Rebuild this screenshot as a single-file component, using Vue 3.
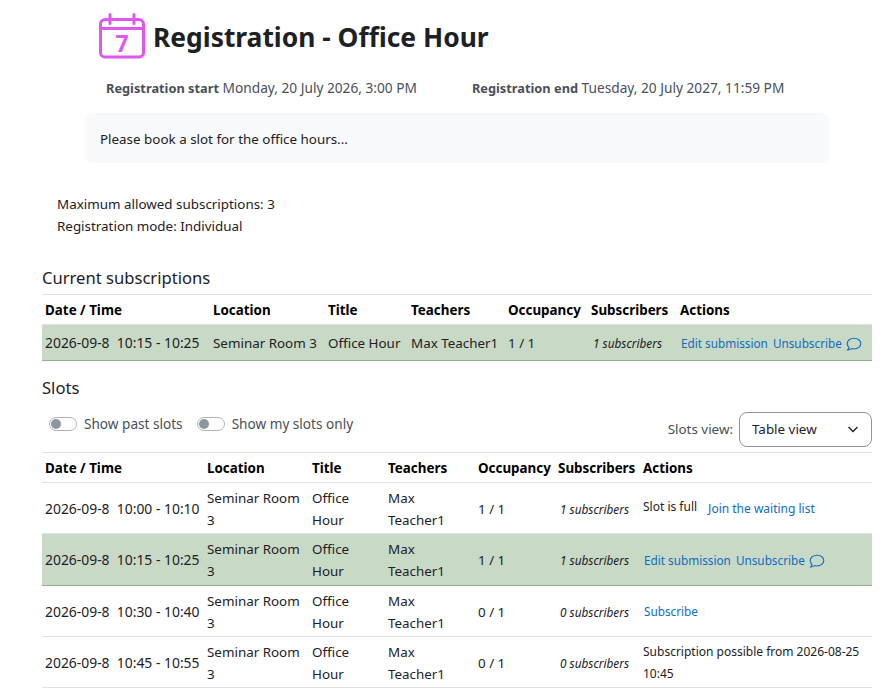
<script setup>
const currentRows = [
  { date: '2026-09-8  10:15 - 10:25', location: 'Seminar Room 3', title: 'Office Hour', teacher: 'Max Teacher1', occupancy: '1 / 1', subscribers: '1 subscribers', mine: true }
]

const slotRows = [
  { date: '2026-09-8  10:00 - 10:10', location: 'Seminar Room 3', title: 'Office Hour', teacher: 'Max Teacher1', occupancy: '1 / 1', subscribers: '1 subscribers', full: true },
  { date: '2026-09-8  10:15 - 10:25', location: 'Seminar Room 3', title: 'Office Hour', teacher: 'Max Teacher1', occupancy: '1 / 1', subscribers: '1 subscribers', mine: true },
  { date: '2026-09-8  10:30 - 10:40', location: 'Seminar Room 3', title: 'Office Hour', teacher: 'Max Teacher1', occupancy: '0 / 1', subscribers: '0 subscribers', open: true },
  { date: '2026-09-8  10:45 - 10:55', location: 'Seminar Room 3', title: 'Office Hour', teacher: 'Max Teacher1', occupancy: '0 / 1', subscribers: '0 subscribers', later: 'Subscription possible from 2026-08-25 10:45' }
]

const headers = ['Date / Time', 'Location', 'Title', 'Teachers', 'Occupancy', 'Subscribers', 'Actions']
const currentCols = [168, 115, 83, 97, 83, 89, 195]
const slotCols = [162, 105, 76, 90, 80, 85, 232]
</script>

<template>
  <div class="page">
    <div class="head">
      <div class="cal">
        <svg viewBox="0 0 46 46" fill="none" stroke="#e056f0" stroke-width="3">
          <rect x="1.500" y="6.500" width="43" height="37.500" rx="4.500" />
          <path d="M1.500 15.500H44.500" />
          <path d="M11 1.500V10.500M35 1.500V10.500" stroke-linecap="round" />
        </svg>
        <span class="cal-day">7</span>
      </div>
      <h1>Registration - Office Hour</h1>
    </div>

    <div class="dates">
      <span><b>Registration start</b> Monday, 20 July 2026, 3:00 PM</span>
      <span><b>Registration end</b> Tuesday, 20 July 2027, 11:59 PM</span>
    </div>

    <div class="intro">Please book a slot for the office hours...</div>

    <div class="limits">
      <div>Maximum allowed subscriptions: 3</div>
      <div>Registration mode: Individual</div>
    </div>

    <h2>Current subscriptions</h2>
    <table class="current">
      <colgroup>
        <col v-for="w in currentCols" :key="w" :style="{ width: w + 'px' }" />
      </colgroup>
      <thead>
        <tr><th v-for="h in headers" :key="h">{{ h }}</th></tr>
      </thead>
      <tbody>
        <tr v-for="row in currentRows" :key="row.date" class="mine">
          <td class="when">{{ row.date }}</td>
          <td>{{ row.location }}</td>
          <td>{{ row.title }}</td>
          <td>{{ row.teacher }}</td>
          <td>{{ row.occupancy }}</td>
          <td class="subs">{{ row.subscribers }}</td>
          <td class="small">
            <a class="own">Edit submission</a><a class="own gap">Unsubscribe</a>
            <svg class="bubble" viewBox="0 0 16 16" fill="none" stroke="#0f6cbf" stroke-width="1.1">
              <path d="M8 2.2c3.8 0 6.8 2.4 6.8 5.4S11.800 13 8 13c-.9 0-1.700-.1-2.500-.4-1 .8-2.300 1.300-3.800 1.300.7-.7 1.200-1.500 1.300-2.500C1.900 10.400 1.200 9.100 1.200 7.600 1.200 4.600 4.200 2.200 8 2.200z" />
            </svg>
          </td>
        </tr>
      </tbody>
    </table>

    <h2 class="slots-title">Slots</h2>
    <div class="filters">
      <label class="toggle"><span class="track"><span class="knob"></span></span>Show past slots</label>
      <label class="toggle"><span class="track"><span class="knob"></span></span>Show my slots only</label>
      <div class="view">
        <span>Slots view:</span>
        <div class="select">
          Table view
          <svg viewBox="0 0 12 12" fill="none" stroke="#1d2125" stroke-width="1.4">
            <path d="M1.500 4l4.500 4.500L10.500 4" />
          </svg>
        </div>
      </div>
    </div>

    <table class="slots">
      <colgroup>
        <col v-for="w in slotCols" :key="w" :style="{ width: w + 'px' }" />
      </colgroup>
      <thead>
        <tr><th v-for="h in headers" :key="h">{{ h }}</th></tr>
      </thead>
      <tbody>
        <tr v-for="row in slotRows" :key="row.date" :class="{ mine: row.mine }">
          <td class="when">{{ row.date }}</td>
          <td>{{ row.location }}</td>
          <td>{{ row.title }}</td>
          <td>{{ row.teacher }}</td>
          <td>{{ row.occupancy }}</td>
          <td class="subs">{{ row.subscribers }}</td>
          <td class="small">
            <template v-if="row.full">
              <span class="note">Slot is full</span><a class="wait">Join the waiting list</a>
            </template>
            <template v-else-if="row.mine">
              <a class="own">Edit submission</a><a class="own gap">Unsubscribe</a>
              <svg class="bubble" viewBox="0 0 16 16" fill="none" stroke="#0f6cbf" stroke-width="1.1">
                <path d="M8 2.2c3.8 0 6.8 2.4 6.8 5.4S11.800 13 8 13c-.9 0-1.700-.1-2.500-.4-1 .8-2.300 1.300-3.800 1.300.7-.7 1.200-1.500 1.300-2.500C1.900 10.400 1.200 9.100 1.200 7.600 1.200 4.600 4.200 2.200 8 2.200z" />
              </svg>
            </template>
            <a v-else-if="row.open" class="own">Subscribe</a>
            <span v-else>{{ row.later }}</span>
          </td>
        </tr>
      </tbody>
    </table>
  </div>
</template>

<style>
html, body {
  margin: 0;
  background: #fff;
}
</style>

<style scoped>
.page {
  width: 872px;
  height: 695px;
  overflow: hidden;
  padding-left: 42px;
  box-sizing: border-box;
  font-family: "Noto Sans", "Open Sans", sans-serif;
  font-size: 13.4px;
  line-height: 22px;
  color: #1d2125;
}

.head {
  display: flex;
  align-items: center;
  gap: 8px;
  padding: 13px 0 0 57px;
  height: 46px;
}

.cal {
  position: relative;
  width: 46px;
  height: 46px;
  flex: none;
}

.cal svg {
  display: block;
  width: 46px;
  height: 46px;
}

.cal-day {
  position: absolute;
  left: 0;
  top: 17px;
  width: 46px;
  text-align: center;
  font-size: 23px;
  line-height: 26px;
  font-weight: 700;
  color: #e056f0;
}

h1 {
  margin: 2px 0 0;
  font-size: 26.4px;
  line-height: 40px;
  font-weight: 700;
}

.dates {
  display: flex;
  gap: 55px;
  margin-top: 18px;
  padding-left: 64px;
  color: #495057;
  font-size: 13.7px;
}

.dates b {
  font-size: 12.8px;
}

.intro {
  margin: 14px 0 0 43px;
  width: 744px;
  height: 50px;
  box-sizing: border-box;
  padding: 15px 15px;
  background: #f8f9fa;
  border-radius: 8px;
}

.limits {
  margin: 30px 0 0 15px;
}

h2 {
  margin: 27px 0 0;
  font-size: 16.6px;
  line-height: 28px;
  font-weight: 400;
}

table {
  border-collapse: collapse;
  table-layout: fixed;
  width: 830px;
}

th {
  text-align: left;
  font-weight: 700;
  color: #000;
  padding: 0 3px;
  height: 29px;
  border-top: 1px solid #dee2e6;
  border-bottom: 1px solid #dee2e6;
  white-space: nowrap;
}

td {
  padding: 4px 3px 2.3px;
  border-bottom: 1px solid #dee2e6;
}

.current {
  margin-top: 2px;
}

.current td {
  padding: 4px 3px 3px;
  height: 28px;
  white-space: nowrap;
}

.mine td {
  background: #c8d9c6;
  border-bottom-color: #8fb08c;
}

td.when {
  font-size: 13.9px;
  white-space: pre;
}

td.subs {
  font-style: italic;
  font-size: 11.8px;
  padding-left: 5px;
}

.small {
  font-size: 12px;
}

a {
  color: #0f6cbf;
}

.own {
  font-size: 11.75px;
  margin-left: 1px;
}

.gap {
  margin-left: 5px;
}

.wait {
  margin-left: 11px;
}

.note {
  position: relative;
  top: -2px;
}

.bubble {
  width: 16px;
  height: 16px;
  margin-left: 4px;
  vertical-align: -4px;
}

.slots-title {
  margin-top: 13px;
}

.filters {
  display: flex;
  align-items: center;
  gap: 14px;
  margin: 4px 0 10px;
  padding-left: 7px;
  width: 823px;
  height: 36px;
  color: #495057;
  font-size: 13.6px;
}

.toggle {
  display: flex;
  align-items: center;
  gap: 7px;
}

.track {
  display: block;
  box-sizing: border-box;
  width: 28px;
  height: 14px;
  padding: 1px;
  border: 1px solid #aeb3b9;
  border-radius: 7px;
}

.knob {
  display: block;
  width: 10px;
  height: 10px;
  border-radius: 50%;
  background: #8f959e;
}

.view {
  display: flex;
  align-items: center;
  gap: 6px;
  margin-left: auto;
  position: relative;
  top: 5px;
  font-size: 13.4px;
}

.select {
  display: flex;
  align-items: center;
  justify-content: space-between;
  box-sizing: border-box;
  width: 133px;
  height: 35px;
  padding: 0 12px;
  border: 1px solid #8f959e;
  border-radius: 8px;
  color: #1d2125;
}

.select svg {
  width: 12px;
  height: 12px;
}
</style>
